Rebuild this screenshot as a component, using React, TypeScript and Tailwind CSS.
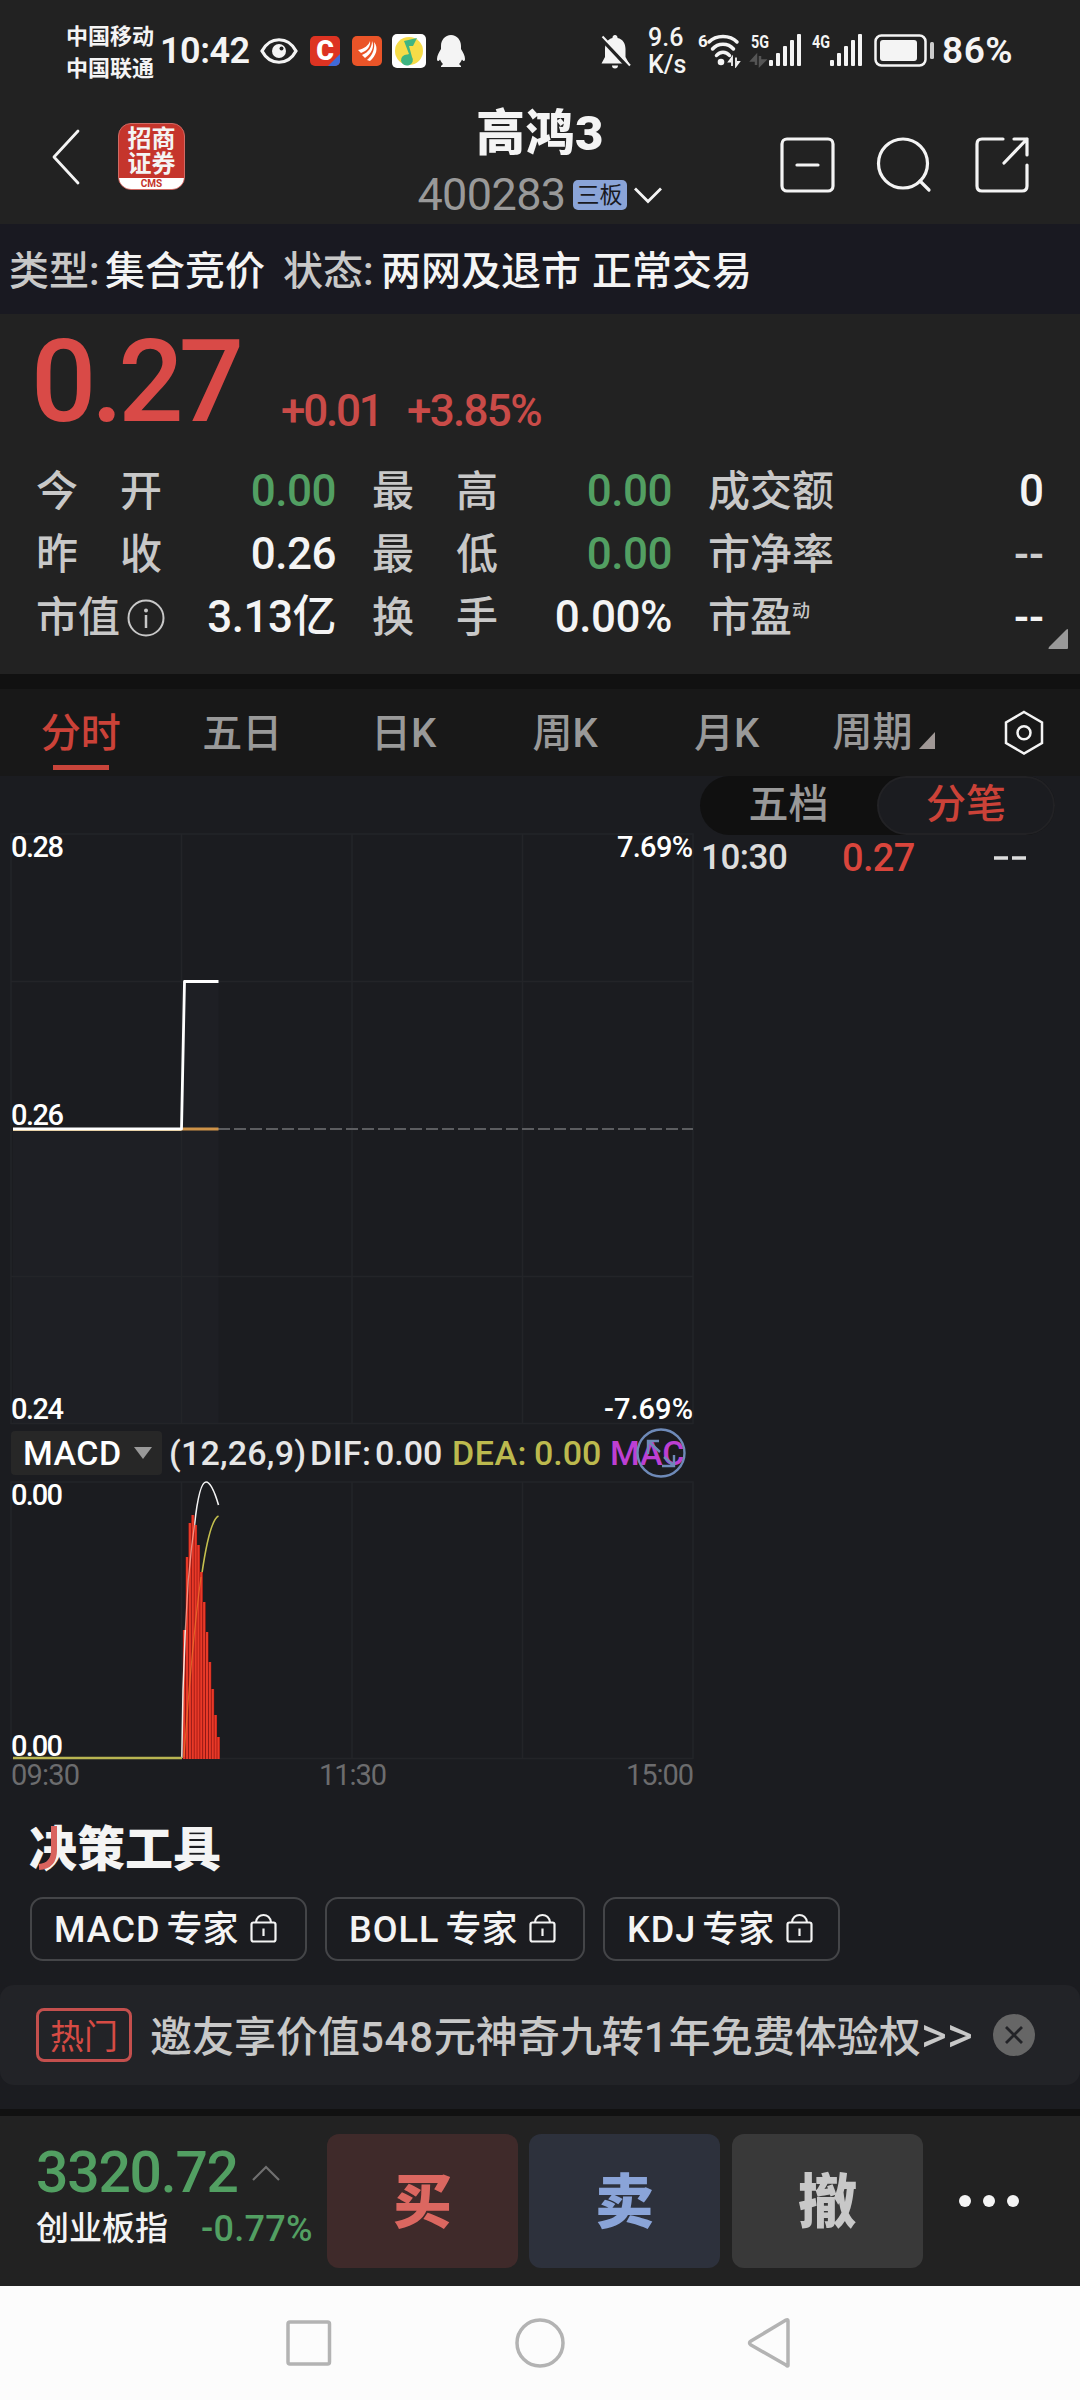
import clsx from "clsx";

const GRID = "#232428";

function StatusBar() {
    return (
        <div className="relative flex h-[104px] text-[#f4f4f4] font-medium">
            <div className="ml-[66px] mt-[21px] text-[22px] leading-[32px] whitespace-nowrap font-bold">
                <div>中国移动</div>
                <div>中国联通</div>
            </div>
            <div className="ml-[6px] mt-[31px] w-[93px] text-[36px] leading-[40px] font-semibold tracking-[-0.5px]">10:42</div>
            <svg className="ml-[7px] mt-[32px]" width="38" height="38" viewBox="0 0 38 38">
                <path d="M2 19C10 4 28 4 36 19C28 34 10 34 2 19Z" fill="none" stroke="#f4f4f4" strokeWidth="3.2" />
                <circle cx="19" cy="19" r="7" fill="#f4f4f4" />
                <circle cx="21.5" cy="16.5" r="2" fill="#222" />
            </svg>
            <div className="relative ml-[12px] mt-[36px] flex h-[30px] w-[30px] items-center justify-center overflow-hidden rounded-[5px] bg-[#dd3322] text-[27px] font-black text-white">
                C
                <svg className="absolute right-0 bottom-0" width="12" height="12"><path d="M12 0V12H0Z" fill="#3f6ad8" /></svg>
            </div>
            <svg className="ml-[12px] mt-[36px]" width="30" height="30" viewBox="0 0 30 30">
                <rect width="30" height="30" rx="5" fill="#ea5428" />
                <path d="M6 14C12 13 17 9 18 5C19 10 15 15 9 17ZM10 19C17 16 20 11 20 5C23 11 19 18 13 22ZM15 24C21 19 23 12 22 6C27 12 24 20 18 25Z" fill="#fff" />
            </svg>
            <svg className="ml-[10px] mt-[34px]" width="34" height="34" viewBox="0 0 34 34">
                <rect width="34" height="34" rx="5" fill="#fff" />
                <circle cx="17" cy="17" r="14" fill="#f6dc48" />
                <path d="M12 7L25 4L21 12H17L20 23A6 5.500 0 1 1 15.500 20.500L17 20Z" fill="#3fb582" />
            </svg>
            <svg className="ml-[11px] mt-[35px]" width="28" height="33" viewBox="0 0 28 33">
                <path d="M14 0C20 0 24 5 24 11V14C26 17 28 21 28 24C28 26 27 27 25 24.500C24 27 23 28 22 29L24 31V32H4V31L6 29C5 28 4 27 3 24.500C1 27 0 26 0 24C0 21 2 17 4 14V11C4 5 8 0 14 0Z" fill="#f4f4f4" />
            </svg>
            <svg className="ml-[136px] mt-[34px]" width="30" height="35" viewBox="0 0 30 35">
                <path d="M14 1A2.500 2.500 0 0 1 16.500 4C22 5 24.500 10 24.500 15V23L28 29.500H0.500L4 23V15C4 10 6.500 5 11.500 4A2.500 2.500 0 0 1 14 1ZM11 31.500H17A3 3 0 0 1 11 31.500Z" fill="#f4f4f4" />
                <path d="M0.500 4.500L26.500 32.500" stroke="#222" strokeWidth="4" />
                <path d="M1.500 2.500L29 31.500" stroke="#f4f4f4" strokeWidth="2" />
            </svg>
            <div className="ml-[17px] mt-[24px] w-[40px] text-[25px] leading-[27px]">
                <div>9.6</div>
                <div>K/s</div>
            </div>
            {/* wifi */}
            <svg className="ml-[10px] mt-[32px]" width="46" height="36" viewBox="0 0 46 36">
                <text x="0" y="15" fill="#f4f4f4" fontSize="17" fontWeight="700">6</text>
                <g fill="none" stroke="#f4f4f4" strokeWidth="3.500" strokeLinecap="round">
                    <path d="M11 10C18 2.500 32 2.500 39 10" />
                    <path d="M14.500 17C20 10.500 30 10.500 35.500 17" />
                    <path d="M18.500 23.500C22 19 28 19 31.500 23.500" />
                </g>
                <circle cx="23" cy="30" r="3.300" fill="#f4f4f4" />
                <path d="M34 34V25.500L31 29.500H33M38 25.500V34L41 30H39" fill="none" stroke="#f4f4f4" strokeWidth="1.800" />
            </svg>
            <Signal label="5G" arrows className="ml-[5px] mt-[32px]" />
            <Signal label="4G" className="ml-[7px] mt-[32px]" />
            <svg className="ml-[10px] mt-[34px]" width="62" height="34" viewBox="0 0 62 34">
                <rect x="1.500" y="1.500" width="50" height="30" rx="6" fill="none" stroke="#f4f4f4" strokeWidth="2.500" />
                <rect x="6" y="6" width="37" height="21" rx="3" fill="#f4f4f4" />
                <rect x="56" y="8" width="4" height="17" rx="1.500" fill="#ccc" />
            </svg>
            <div className="ml-[6px] mt-[31px] text-[37px] leading-[40px] font-semibold tracking-[0.500px]">86%</div>
        </div>
    );
}

function Signal({ label, arrows, className }: { label: string; arrows?: boolean; className: string }) {
    return (
        <svg className={className} width="54" height="36" viewBox="0 0 54 36">
            <text x="2" y="16" fill="#f4f4f4" fontSize="18" fontWeight="700" textLength="18" lengthAdjust="spacingAndGlyphs">{label}</text>
            {arrows && <path d="M7 33V24L3 28.500H6M11 24V33L15.500 28.500H12" fill="none" stroke="#555" strokeWidth="2.500" />}
            {[6, 13, 20, 26, 32].map((h, i) => (
                <rect key={h} x={20 + i * 7} y={34 - h} width="4" height={h} rx="1" fill="#f4f4f4" />
            ))}
        </svg>
    );
}

function Header() {
    return (
        <div className="relative flex h-[120px] items-start text-[#f4f4f4]">
            <svg className="ml-[50px] mt-[24px]" width="32" height="58" viewBox="0 0 32 58">
                <path d="M28 3L4 29L28 55" fill="none" stroke="#f4f4f4" strokeWidth="2.800" strokeLinecap="round" strokeLinejoin="round" />
            </svg>
            <div className="ml-[36px] mt-[19px] flex h-[67px] w-[67px] flex-col overflow-hidden rounded-[13px] border border-[#d06a64] bg-[#c5352c] text-center">
                <div className="h-[54px] pt-[3px] text-[24px] leading-[25px] font-bold">
                    <div>招商</div>
                    <div>证券</div>
                </div>
                <div className="flex-1 bg-white text-[10px] leading-[11px] font-bold text-[#c5352c]">CMS</div>
            </div>
            <div className="ml-[205px] flex w-[300px] flex-col items-center">
                <div className="text-[49px] leading-[60px] font-black tracking-[0.5px]">高鸿3</div>
                <div className="flex h-[62px] items-center">
                    <span className="text-[45px] leading-[50px] tracking-[-0.600px] text-[#999]">400283</span>
                    <span className="ml-[7px] flex h-[30px] w-[54px] items-center justify-center rounded-[5px] bg-[#8aa4d8] pt-[1px] text-[23px] leading-[30px] text-[#191921]">三板</span>
                    <svg className="ml-[6px]" width="30" height="18" viewBox="0 0 30 18">
                        <path d="M2 2.500L15 15.500L28 2.500" fill="none" stroke="#f4f4f4" strokeWidth="2.800" />
                    </svg>
                </div>
            </div>
            <svg className="ml-[89px] mt-[33px]" width="58" height="56" viewBox="0 0 58 56">
                <g fill="none" stroke="#f4f4f4" strokeWidth="3.200" strokeLinecap="round">
                    <rect x="3" y="2" width="51" height="52" rx="5" />
                    <path d="M18 28H39" />
                </g>
            </svg>
            <svg className="ml-[39px] mt-[33px]" width="56" height="56" viewBox="0 0 56 56">
                <g fill="none" stroke="#f4f4f4" strokeWidth="3.200" strokeLinecap="round">
                    <circle cx="27" cy="26.500" r="24.500" />
                    <path d="M44 44L53 53" />
                </g>
            </svg>
            <svg className="ml-[43px] mt-[33px]" width="58" height="56" viewBox="0 0 58 56">
                <g fill="none" stroke="#f4f4f4" strokeWidth="3.200" strokeLinecap="round" strokeLinejoin="round">
                    <path d="M28 2H7Q2 2 2 7V49Q2 54 7 54H47Q52 54 52 49V28" />
                    <path d="M39 2H52V18M52 2L29 26" />
                </g>
            </svg>
        </div>
    );
}

function Quote() {
    const rows = [
        ["今　开", "0.00", "最　高", "0.00", "成交额", "0"],
        ["昨　收", "0.26", "最　低", "0.00", "市净率", "--"],
        ["市值", "3.13亿", "换　手", "0.00%", "市盈", "--"],
    ];
    const tone = (v: string) => (v === "0.00" ? "text-[#529f62]" : v === "--" ? "text-[#ccc]" : "text-[#f4f4f4]");
    return (
        <div className="relative h-[360px] bg-[#222222] text-[44px] font-[480]">
            <div className="flex h-[146px] text-[#c94b48]">
                <span className="ml-[31px] mt-[13px] w-[248px] text-[115px] leading-[110px] tracking-[-5px] text-[#d94a47]">0.27</span>
                <span className="ml-[2px] mt-[67px] w-[126px] leading-[60px] tracking-[-2.200px]">+0.01</span>
                <span className="mt-[67px] leading-[60px] tracking-[-1.700px]">+3.85%</span>
            </div>
            {rows.map((r, i) => (
                <div key={i} className="flex h-[63px] items-center text-[42px] leading-[63px] text-[#c8c8c8]">
                    <div className="ml-[36px] flex w-[131px] items-center font-medium whitespace-nowrap">
                        {r[0]}
                        {i === 2 && (
                            <svg className="ml-[6px]" width="40" height="40" viewBox="0 0 40 40">
                                <circle cx="20" cy="20" r="17.500" fill="none" stroke="#c8c8c8" strokeWidth="2" />
                                <path d="M20 17V30" stroke="#c8c8c8" strokeWidth="2.500" />
                                <circle cx="20" cy="12.500" r="2" fill="#c8c8c8" />
                            </svg>
                        )}
                    </div>
                    <div className={clsx("w-[169px] text-right text-[44px] tracking-[-0.500px]", tone(r[1]))}>{r[1]}</div>
                    <div className="ml-[36px] w-[131px] font-medium whitespace-nowrap">{r[2]}</div>
                    <div className={clsx("w-[169px] text-right text-[44px] tracking-[-0.500px]", tone(r[3]))}>{r[3]}</div>
                    <div className="ml-[36px] flex w-[201px] font-medium">
                        {r[4]}
                        {i === 2 && <span className="text-[18px] leading-[50px]">动</span>}
                    </div>
                    <div className={clsx("w-[135px] text-right text-[44px]", i === 1 ? "text-[#ccc]" : "text-[#f4f4f4]")}>{r[5]}</div>
                </div>
            ))}
            <svg className="absolute right-[12px] bottom-[25px]" width="20" height="20"><path d="M20 1V19Q20 20 19 20H1Q0 20 1 18L18 1Q20 -1 20 1Z" fill="#999" /></svg>
        </div>
    );
}

function Tabs() {
    const tabs = ["分时", "五日", "日K", "周K", "月K"];
    return (
        <div className="flex h-[87px] bg-[#181818] text-[40px] leading-[90px] font-[480] text-[#999]">
            {tabs.map((t, i) => (
                <div key={t} className={clsx("relative w-[161.500px] text-center", i === 0 && "text-[#cb4238]")}>
                    {t}
                    {i === 0 && <div className="absolute bottom-[6px] left-[53px] h-[5px] w-[56px] bg-[#c8443a]" />}
                </div>
            ))}
            <div className="flex w-[162px] items-center pl-[25px]">
                周期
                <svg className="ml-[6px] mt-[15px]" width="16" height="17"><path d="M16 0V17H0Z" fill="#a09896" /></svg>
            </div>
            <svg className="ml-[34px] mt-[21px]" width="40" height="46" viewBox="0 0 40 46">
                <path d="M20 2L38 12.500V33L20 43.500L2 33V12.500Z" fill="none" stroke="#f4f4f4" strokeWidth="2.500" />
                <circle cx="20" cy="22.700" r="6.500" fill="none" stroke="#f4f4f4" strokeWidth="2.500" />
            </svg>
        </div>
    );
}

// tops of the MACD histogram, measured from the panel top
const bars = [149, 76, 42, 34, 44, 64, 91, 121, 151, 181, 208, 234, 256];

function Charts() {
    return (
        <div className="w-[700px]">
            <div className="relative mt-[57px] h-[592px]">
                <svg className="overflow-visible" width="700" height="592" viewBox="0 0 700 592">
                    <path d="M13 296H181L184 148H218.500V590H13Z" fill="#1e1f24" />
                    <g fill="none" stroke={GRID} strokeWidth="1.500">
                        <path d="M11 1H693V590.500H11ZM11 148.500H693M11 443.500H693" />
                        <path d="M181.500 1V590M352 1V590M522.500 1V590" />
                    </g>
                    <path d="M218 296H693" stroke="#5c5d60" strokeWidth="2" strokeDasharray="12 4" />
                    <path d="M181 296H218.500" stroke="#cf9348" strokeWidth="3" />
                    <path d="M13 296H181.500L184.500 148.500H218.500" fill="none" stroke="#fff" strokeWidth="2.800" strokeLinejoin="round" />
                    <path d="M13 297.500H181" stroke="#e8d2a8" strokeWidth="1" />
                    <g fill="#fff" fontSize="29" fontWeight="480">
                        <text x="11" y="24" textLength="53">0.28</text>
                        <text x="11" y="292" textLength="53">0.26</text>
                        <text x="11" y="586" textLength="53">0.24</text>
                        <text x="617" y="24" textLength="76">7.69%</text>
                        <text x="604" y="586" textLength="89">-7.69%</text>
                    </g>
                </svg>
            </div>
            <div className="relative mt-[6px] flex h-[44px] items-center pl-[11px] text-[34px] leading-[46px] font-[480] whitespace-nowrap text-[#e6e6e6]">
                <div className="flex h-[44px] w-[151px] items-center rounded-[4px] bg-[#272727] pl-[12px] text-white">
                    <span className="w-[99px] tracking-[0.500px]">MACD</span>
                    <svg className="ml-[12px]" width="18" height="12"><path d="M0 0H18L9 12Z" fill="#999" /></svg>
                </div>
                <span className="ml-[7px] w-[141px] tracking-[0.200px]">(12,26,9)</span>
                <span className="w-[65px] tracking-[0.500px]">DIF:</span>
                <span className="w-[77px]">0.00</span>
                <span className="w-[82px] tracking-[0.500px] text-[#bcb94e]">DEA:</span>
                <span className="w-[76px] text-[#bcb94e]">0.00</span>
                <span className="text-[#bd3fd3]">MAC</span>
                <svg className="absolute top-[-3px] left-[636px]" width="50" height="50" viewBox="0 0 50 50">
                    <g fill="none" stroke="#6e8ab8" strokeWidth="2.400">
                        <circle cx="25" cy="25" r="23.500" />
                        <path d="M12 26V13H23M12 13L24 24" />
                        <path d="M38 27V38H26M38 38L28 29" />
                    </g>
                </svg>
            </div>
            <svg className="mt-[6px] overflow-visible" width="700" height="310" viewBox="0 0 700 310">
                <g fill="none" stroke={GRID} strokeWidth="1.500">
                    <path d="M11 1H693V277.500H11Z" />
                    <path d="M181.500 1V277M352 1V277M522.500 1V277" />
                </g>
                <path d="M194.500 44C198 12 202 1 206 1C211 1 215 12 218.500 24" fill="none" stroke="#f4f4f4" strokeWidth="1.600" />
                <path d="M202 92C207 58 212 38 218.500 35" fill="none" stroke="#c4c04e" strokeWidth="1.600" />
                {bars.map((y, i) => (
                    <g key={i}>
                        <rect x={182.8 + i * 2.85} y={y} width="2.85" height={278 - y} fill="#a81612" />
                        <rect x={183.2 + i * 2.85} y={y} width="2" height={278 - y} fill="#e83a28" />
                    </g>
                ))}
                <path d="M185.300 149L188.300 99L191.700 65L194.500 44" fill="none" stroke="#ffb8a8" strokeWidth="1.300" opacity="0.7" />
                <path d="M184 276C190 190 195 140 201 96" fill="none" stroke="#ee7a2c" strokeWidth="1.200" opacity="0.7" />
                <path d="M181.800 277L183 209L185.300 149" fill="none" stroke="#f4e8e0" strokeWidth="1.500" />
                <path d="M13 277H182" stroke="#b9b552" strokeWidth="2.500" />
                <g fill="#fff" fontSize="29" fontWeight="480">
                    <text x="11" y="24" textLength="52">0.00</text>
                    <text x="11" y="275" textLength="52">0.00</text>
                </g>
                <g fill="#6c6c6e" fontSize="29">
                    <text x="11" y="304" textLength="69">09:30</text>
                    <text x="319" y="304" textLength="68">11:30</text>
                    <text x="626" y="304" textLength="68">15:00</text>
                </g>
            </svg>
        </div>
    );
}

function Ticks() {
    return (
        <div className="w-[355px] font-[480]">
            <div className="flex h-[59px] rounded-full bg-[#101010] text-[40px] leading-[57px]">
                <div className="w-[177px] text-center text-[#999]">五档</div>
                <div className="h-[59px] w-[178px] rounded-full border-2 border-[#222225] bg-[#1b1c20] text-center leading-[53px] text-[#cb4238]">分笔</div>
            </div>
            <div className="flex h-[46px] items-center pl-[1px] text-[35px] text-[#ddd]">
                <span className="w-[141px] tracking-[-0.500px]">10:30</span>
                <span className="w-[151px] text-[38px] tracking-[-0.700px] text-[#d9453c]">0.27</span>
                <svg width="34" height="6"><path d="M1 3H15M19 3H33" stroke="#ddd" strokeWidth="3.500" /></svg>
            </div>
        </div>
    );
}

function Chip({ name, className }: { name: string; className: string }) {
    return (
        <div className={clsx("flex h-[64px] items-center rounded-[13px] border-2 border-[#444548] pt-[2px] pl-[22px] text-[36px] leading-[60px] font-[480] text-[#f4f4f4]", className)}>
            <span className="tracking-[1px]">{name}</span>
            <span className="ml-[6px] font-medium">专家</span>
            <svg className="mb-[3px] ml-[12px]" width="28" height="31" viewBox="0 0 28 31">
                <g fill="none" stroke="#f4f4f4" strokeWidth="2.200">
                    <rect x="1.500" y="9.500" width="24" height="19" rx="2" />
                    <path d="M6 9.500C7 -0.500 20 -0.500 21 9.500M13.500 15.500V23" />
                </g>
            </svg>
        </div>
    );
}

function Tools() {
    return (
        <div className="h-[317px] pt-[24px]">
            <div className="relative ml-[29px] h-[60px] text-[48px] leading-[67px] font-black text-[#f4f4f4]">
                决策工具
                <svg className="absolute top-[10px] left-[9px]" width="24" height="48"><path d="M16 0V24Q16 40 1 41" fill="none" stroke="#d9635e" strokeWidth="6" /></svg>
            </div>
            <div className="mt-[21px] flex gap-[18px] pl-[30px]">
                <Chip name="MACD" className="w-[277px]" />
                <Chip name="BOLL" className="w-[260px]" />
                <Chip name="KDJ" className="w-[237px]" />
            </div>
            <div className="mt-[24px] flex h-[100px] items-center rounded-[14px] bg-[#222327]">
                <div className="ml-[36px] h-[54px] w-[96px] rounded-[8px] border-[3px] border-[#c44f4d] text-center text-[34px] leading-[53px] text-[#d64b44]">热门</div>
                <div className="ml-[18px] w-[828px] pt-[2px] text-[42px] leading-[60px] font-medium whitespace-nowrap text-[#c8c8c8]">
                    邀友享价值<span className="tracking-[0.700px]">548</span>元神奇九转<span className="tracking-[1px]">1</span>年免费体验权<span className="text-[50px] font-normal">&gt;&gt;</span>
                </div>
                <svg className="ml-[14px]" width="44" height="44" viewBox="0 0 44 44">
                    <circle cx="22" cy="22" r="21" fill="#666" />
                    <path d="M14 14L30 30M30 14L14 30" stroke="#222327" strokeWidth="2.800" />
                </svg>
            </div>
        </div>
    );
}

function TradeBar() {
    const btn = "h-[134px] w-[191px] rounded-[12px] text-center text-[59px] leading-[138px] font-black";
    return (
        <div className="flex h-[170px] bg-[#222222] pt-[18px]">
            <div className="w-[327px] pl-[36px]">
                <div className="mt-[8px] flex h-[62px] items-center text-[57px] leading-[64px] font-[480] tracking-[-1.200px] text-[#529f62]">
                    3320.72
                    <svg className="ml-[13px]" width="30" height="18" viewBox="0 0 30 18"><path d="M2 16L15 3L28 16" fill="none" stroke="#707070" strokeWidth="2.200" /></svg>
                </div>
                <div className="mt-[6px] flex text-[33px] leading-[38px] whitespace-nowrap">
                    <span className="w-[165px] font-medium text-[#f4f4f4]">创业板指</span>
                    <span className="text-[36px] font-[480] tracking-[0.300px] text-[#529f62]">-0.77%</span>
                </div>
            </div>
            <div className="flex gap-[11px]">
                <button className={clsx(btn, "bg-[#3f2a2a] text-[#db6760]")}>买</button>
                <button className={clsx(btn, "bg-[#2d313c] text-[#8aa4d8]")}>卖</button>
                <button className={clsx(btn, "ml-[1px] bg-[#393939] text-[#c8c8c8]")}>撤</button>
            </div>
            <div className="ml-[36px] mt-[61px] flex gap-[12px]">
                {[0, 1, 2].map((d) => (
                    <span key={d} className="h-[12px] w-[12px] rounded-full bg-[#f4f4f4]" />
                ))}
            </div>
        </div>
    );
}

export default function App() {
    return (
        <div className="h-[2400px] w-[1080px] overflow-hidden bg-[#222222] font-['Roboto','Noto_Sans_CJK_SC',sans-serif]">
            <StatusBar />
            <Header />
            <div className="flex h-[90px] bg-[#191921] pl-[9px] text-[40px] leading-[96px] font-medium whitespace-nowrap text-[#f4f4f4]">
                <span className="w-[96px] text-[#c8c8c8]">类型:</span>
                <span className="w-[178px]">集合竞价</span>
                <span className="w-[98px] text-[#c8c8c8]">状态:</span>
                <span className="w-[211px]">两网及退市</span>
                <span>正常交易</span>
            </div>
            <Quote />
            <div className="h-[15px] bg-[#111111]" />
            <Tabs />
            <div className="h-[1333px] bg-[#1b1c20]">
                <div className="flex h-[1016px]">
                    <Charts />
                    <Ticks />
                </div>
                <Tools />
            </div>
            <div className="h-[7px] bg-[#111111]" />
            <TradeBar />
            <div className="flex h-[114px] items-center bg-[#fcfcfc] pl-[285px]">
                <svg width="510" height="54" viewBox="0 0 510 54">
                    <g fill="none" stroke="#b3b3b3" strokeWidth="3.500" strokeLinejoin="round">
                        <rect x="3" y="6" width="41.500" height="42" rx="2" />
                        <circle cx="255" cy="27" r="23" />
                        <path d="M503 5V49Q503 51 501 49L466 29Q463 27 466 25L501 4Q503 3 503 5Z" />
                    </g>
                </svg>
            </div>
        </div>
    );
}
